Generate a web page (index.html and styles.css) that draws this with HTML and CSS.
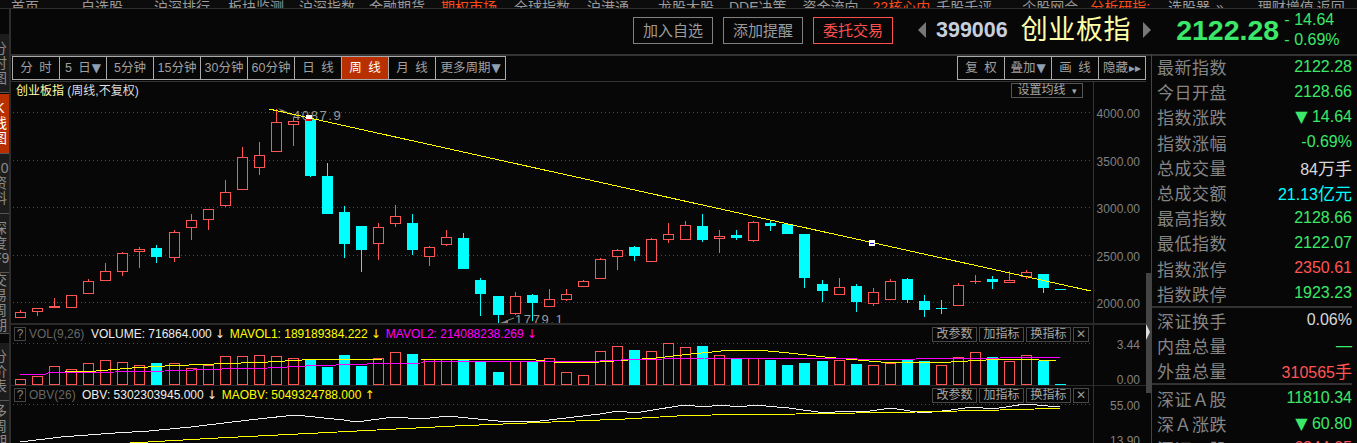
FILE: index.html
```html
<!DOCTYPE html>
<html lang="zh-CN">
<head>
<meta charset="utf-8">
<title>创业板指 周线</title>
<link rel="stylesheet" href="styles.css">
</head>
<body>
<div class="page">
  <nav class="menu">
    <span>首页</span><span class="m42">自选股</span><span class="m31">沪深排行</span><span class="m18">板块监测</span><span class="m15">沪深指数</span><span class="m14">金融期货</span><span class="m16 hot">期权市场</span><span class="m17">全球指数</span><span class="m17">沪港通</span><span class="m29">龙股大股</span><span class="m15">DDE决策</span><span class="m16">资金流向</span><span class="m14 hot">22核心内</span><span class="m6">千股千评</span><span class="m30">个股网会</span><span class="m12 hot">分析研指:</span><span class="m18">选股器</span><span class="m6">»</span><span class="m34">理财增值</span><span class="m3">返回</span>
  </nav>
  <div class="workspace">
    <aside class="rail">
      <div class="rail-tab t1"><span>分</span><span>时</span><span>图</span></div>
      <div class="rail-tab t2 on"><span>K</span><span>线</span><span>图</span></div>
      <div class="rail-tab t3"><span>10</span><span>资</span><span>料</span></div>
      <div class="rail-tab t4"><span>深</span><span>度</span><span>F9</span></div>
      <div class="rail-tab t5"><span>交</span><span>易</span><span>周</span><span>期</span></div>
      <div class="rail-tab t6"><span>分</span><span>价</span><span>表</span></div>
      <div class="rail-tab t7"><span>多</span><span>周</span><span>期</span></div>
    </aside>
    <div class="content">
      <header class="quote">
        <button class="qbtn">加入自选</button>
        <button class="qbtn">添加提醒</button>
        <button class="qbtn danger">委托交易</button>
        <i class="tri-l"></i>
        <span class="code">399006</span>
        <span class="name">创业板指</span>
        <i class="tri-r"></i>
        <span class="price">2122.28</span>
        <div class="change"><span><b>-</b>14.64</span><span><b>-</b>0.69%</span></div>
      </header>
      <div class="split">
        <div class="chartcol">
          <div class="toolbar">
            <div class="tabs">
              <span>分 时</span><span>5 日<em>▼</em></span><span>5分钟</span><span>15分钟</span><span>30分钟</span><span>60分钟</span><span>日 线</span><span class="active">周 线</span><span>月 线</span><span class="wide">更多周期<em>▼</em></span>
            </div>
            <div class="tabs">
              <span>复 权</span><span>叠加<em>▼</em></span><span>画 线</span><span>隐藏<em>▸▸</em></span>
            </div>
          </div>
          <section class="panel p-main">
            <svg id="mainChart" class="plot" viewBox="11 82 1135 241" width="1135" height="241">
              <g class="grid">
                <line x1="13" x2="1093" y1="112.5" y2="112.5"/><line x1="13" x2="1093" y1="160.5" y2="160.5"/><line x1="13" x2="1093" y1="207.5" y2="207.5"/><line x1="13" x2="1093" y1="255.5" y2="255.5"/><line x1="13" x2="1093" y1="302.5" y2="302.5"/>
              </g>
              <line class="axisline" x1="1093.5" x2="1093.5" y1="82" y2="323"/>
              <g class="axis">
                <text x="1140" y="118">4000.00</text><text x="1140" y="166">3500.00</text><text x="1140" y="213">3000.00</text><text x="1140" y="261">2500.00</text><text x="1140" y="308">2000.00</text>
              </g>
              <g id="candles"></g>
              <path class="pointer" d="M278 108l8 4-3 1z"/>
              <path class="pointer-line" d="M282 110l10 5"/>
              <text class="extreme" x="293" y="120">4087.9</text>
              <path class="pointer" d="M500 323l8-3 0 3z"/>
              <path class="pointer-line" d="M506 321l8-3"/>
              <text class="extreme" x="515" y="324">1779.1</text>
              <line class="trend" x1="269" y1="109" x2="1091" y2="291"/>
              <rect class="handle" x="306" y="115" width="6" height="6"/><rect class="handle-red" x="306" y="119" width="6" height="2"/>
              <rect class="handle" x="869" y="240" width="6" height="6"/><rect class="handle-blue" x="870" y="243" width="4" height="1"/>
            </svg>
            <div class="title"><span class="t-name">创业板指</span> (周线,不复权)</div>
            <button class="ma-btn">设置均线<em>▾</em></button>
          </section>
          <section class="panel p-vol">
            <svg id="volChart" class="plot" viewBox="11 325 1135 60" width="1135" height="60">
              <g class="grid"><line x1="13" x2="1093" y1="343.5" y2="343.5"/></g>
              <line class="axisline" x1="1093.5" x2="1093.5" y1="325" y2="385"/>
              <g class="axis"><text x="1140" y="349">3.44</text><text x="1140" y="384">0.00</text></g>
              <g id="bars"></g>
              <polyline class="ma-y" points="65,372 96,371 132,368 165,366 214,364 268,362 302,360 383,359 421,359 475,359 536,360 563,363 600,362 628,360 656,358 691,354 712,352 730,350 758,350 789,353 825,357 846,359 881,362 951,362 986,360 1021,359 1056,361"/>
              <polyline class="ma-m" points="20,374 46,374 48,373 115,372 165,371 222,369 268,368 306,366 367,364 421,363 425,361 536,361 600,361 621,360 705,358 832,358 881,360 916,359 1000,358 1021,357 1060,358"/>
            </svg>
            <div class="ind-head">
              <span class="help">?</span><span class="ind-name">VOL(9,26)</span>
              <span class="white">VOLUME: 716864.000</span><span class="white arrow">↓</span>
              <span class="yellow">MAVOL1: 189189384.222</span><span class="yellow arrow">↓</span>
              <span class="magenta">MAVOL2: 214088238.269</span><span class="magenta arrow">↓</span>
            </div>
            <div class="ind-tools"><button>改参数</button><button>加指标</button><button>换指标</button><button class="close">✕</button></div>
          </section>
          <section class="panel p-obv">
            <svg class="plot" viewBox="11 386 1135 57" width="1135" height="57">
              <g class="grid"><line x1="13" x2="1093" y1="404.5" y2="404.5"/></g>
              <line class="axisline" x1="1093.5" x2="1093.5" y1="386" y2="443"/>
              <g class="axis"><text x="1140" y="410">55.00</text><text x="1140" y="445">13.90</text></g>
              <polyline class="obv-w" points="20,442 61,437 115,433 149,431 191,427 249,420 295,415 344,420 356,422 394,417 421,419 448,416 498,421 532,422 600,414 618,411 635,413 684,405 705,407 719,405 740,407 754,405 789,408 825,413 846,411 863,412 891,408 923,413 951,410 972,407 993,409 1025,404 1060,407"/>
              <polyline class="ma-y" points="130,443 218,438 318,433 455,426 600,420 625,419 677,416 712,415 796,414 916,412 1000,410 1035,409 1060,408"/>
            </svg>
            <div class="ind-head">
              <span class="help">?</span><span class="ind-name obv">OBV(26)</span>
              <span class="white">OBV: 5302303945.000</span><span class="white arrow">↓</span>
              <span class="yellow">MAOBV: 5049324788.000</span><span class="yellow arrow">↑</span>
            </div>
            <div class="ind-tools"><button>改参数</button><button>加指标</button><button>换指标</button><button class="close">✕</button></div>
          </section>
        </div>
        <div class="splitter"><div class="grip"><i></i></div></div>
        <aside class="stats">
          <div class="group">
            <div class="row"><label>最新指数</label><span class="g">2122.28</span></div>
            <div class="row"><label>今日开盘</label><span class="g">2128.66</span></div>
            <div class="row"><label>指数涨跌</label><span class="g"><u>▼</u> 14.64</span></div>
            <div class="row"><label>指数涨幅</label><span class="g">-0.69%</span></div>
            <div class="row"><label>总成交量</label><span class="w">84<small>万手</small></span></div>
            <div class="row"><label>总成交额</label><span class="c">21.13<small>亿元</small></span></div>
            <div class="row"><label>最高指数</label><span class="g">2128.66</span></div>
            <div class="row"><label>最低指数</label><span class="g">2122.07</span></div>
            <div class="row"><label>指数涨停</label><span class="r">2350.61</span></div>
            <div class="row"><label>指数跌停</label><span class="g">1923.23</span></div>
          </div>
          <div class="group">
            <div class="row"><label>深证换手</label><span class="w">0.06%</span></div>
            <div class="row"><label>内盘总量</label><span class="g">—</span></div>
            <div class="row"><label>外盘总量</label><span class="r">310565<small>手</small></span></div>
          </div>
          <div class="group last">
            <div class="row"><label>深证Ａ股</label><span class="g">11810.34</span></div>
            <div class="row"><label>深Ａ涨跌</label><span class="g"><u>▼</u> 60.80</span></div>
            <div class="row"><label>深证Ｂ股</label><span class="r">6244.05</span></div>
          </div>
        </aside>
      </div>
    </div>
  </div>
</div>
<script src="app.js"></script>
</body>
</html>
```
FILE: styles.css
```css
* { box-sizing: border-box; }
html, body { margin: 0; height: 100%; background: #070707; overflow: hidden; }
body { font-family: "Liberation Sans", "Noto Sans CJK SC", sans-serif; color: #999; }
button { font-family: inherit; background: none; padding: 0; margin: 0; cursor: default; }
em { font-style: normal; }
.page { width: 1357px; height: 443px; display: flex; flex-direction: column; overflow: hidden; }

.menu { height: 8px; flex: none; display: flex; align-items: flex-end; overflow: hidden; padding-left: 11px; font-size: 14px; line-height: 14px; color: #9a9a9a; background: #0c0c0c; }
.menu span { flex: none; position: relative; top: 6px; }
.menu .hot { color: #ff4a1a; }
.m3 { margin-left: 3px; } .m6 { margin-left: 6px; } .m12 { margin-left: 12px; } .m14 { margin-left: 14px; } .m15 { margin-left: 15px; } .m16 { margin-left: 16px; } .m17 { margin-left: 17px; } .m18 { margin-left: 18px; } .m29 { margin-left: 29px; } .m30 { margin-left: 30px; } .m31 { margin-left: 31px; } .m34 { margin-left: 34px; } .m42 { margin-left: 42px; }

.workspace { flex: 1; display: flex; min-height: 0; }
.rail { width: 11px; flex: none; border-right: 2px solid #2e2e2e; padding-top: 25px; display: flex; flex-direction: column; overflow: hidden; border-top: 1px solid #2e2e2e; }
.rail-tab { flex: none; display: flex; flex-direction: column; align-items: flex-end; justify-content: center; font-size: 14px; line-height: 15px; color: #8a8a8a; background: #1c1c1c; border-bottom: 1px solid #555; padding-right: 2px; overflow: hidden; }
.rail-tab span { flex: none; width: 14px; text-align: center; white-space: nowrap; }
.rail-tab.on { background: #b83000; color: #fff; }
.t1 { height: 59px; margin-bottom: 1px; } .t2 { height: 60px; } .t3 { height: 60px; } .t4 { height: 59px; } .t5 { height: 61px; margin-bottom: 9px; } .t6 { height: 58px; } .t7 { height: 52px; }

.content { flex: 1; min-width: 0; display: flex; flex-direction: column; }
.quote { height: 48px; flex: none; display: flex; align-items: center; padding-left: 622px; border-top: 1px solid #2e2e2e; border-bottom: 2px solid #333; padding-bottom: 3px; }
.qbtn { width: 80px; height: 27px; margin-right: 10px; border: 1px solid #808080; color: #9c9c9c; font-size: 15px; line-height: 25px; }
.qbtn.danger { border-color: #ff5050; color: #ff5050; }
.tri-l, .tri-r { width: 0; height: 0; border-top: 8px solid transparent; border-bottom: 8px solid transparent; flex: none; }
.tri-l { margin-left: 15px; border-right: 8px solid #777; }
.tri-r { margin-left: 12px; border-left: 8px solid #777; }
.code { margin-left: 10px; font-size: 21.5px; font-weight: 700; color: #c6cfdd; }
.name { margin-left: 13px; font-size: 27px; letter-spacing: .6px; line-height: 34px; color: #ffffa8; }
.price { margin-left: 25px; font-size: 28.5px; font-weight: 700; color: #3ce86a; }
.change { margin-left: 5px; display: flex; flex-direction: column; font-size: 16px; line-height: 20px; color: #3ce86a; }
.change b { font-weight: 400; display: inline-block; width: 10px; }

.split { flex: 1; min-height: 0; display: flex; }
.chartcol { width: 1135px; flex: none; display: flex; flex-direction: column; }
.toolbar { height: 26px; flex: none; display: flex; justify-content: space-between; padding: 0 0 1px 1px; border-bottom: 1px solid #333; }
.tabs { display: flex; height: 24px; border: 1px solid #aaa; }
.tabs span { width: 47px; flex: none; text-align: center; font-size: 12.5px; word-spacing: 3px; line-height: 22px; color: #a0a0a0; border-left: 1px solid #aaa; white-space: nowrap; }
.tabs span:first-child { border-left: 0; width: 46px; }
.tabs em { color: #8fa0b4; font-size: 12px; font-family: "DejaVu Sans", sans-serif; margin-left: 1px; }
.tabs .active { background: #b83000; color: #fff; }
.tabs .wide { width: 70px; }

.panel { position: relative; flex: none; overflow: hidden; }
.p-main { height: 241px; }
.p-vol { height: 62px; border-top: 2px solid #2a2a2a; }
.p-obv { height: 58px; border-top: 1px solid #2a2a2a; }
.plot { display: block; }
.grid line { stroke: #4a4a4a; stroke-width: 1; stroke-dasharray: 1 3; }
.axisline { stroke: #333; stroke-width: 1; }
.axis text { fill: #808080; font-size: 12px; text-anchor: end; font-family: "Liberation Sans", sans-serif; }
.trend { stroke: #ffff00; stroke-width: 1; shape-rendering: crispEdges; }
.handle { fill: #fff; } .handle-red { fill: #e00000; } .handle-blue { fill: #0000d0; }
.pointer { fill: #888; }
.pointer-line { stroke: #888; fill: none; }
.extreme { fill: #9a9a9a; font-size: 13px; letter-spacing: 1.6px; font-family: "Liberation Sans", sans-serif; }
.ma-y, .ma-m, .obv-w { fill: none; stroke-width: 1; shape-rendering: crispEdges; }
.ma-y { stroke: #ffff00; } .ma-m { stroke: #ff00ff; } .obv-w { stroke: #f0f0f0; }

.title { position: absolute; left: 5px; top: 2px; font-size: 12px; line-height: 15px; color: #ddd; white-space: nowrap; }
.t-name { color: #ffffa8; }
.ma-btn { position: absolute; left: 1000px; top: 1px; width: 72px; height: 15px; border: 1px solid #555; color: #a8a8a8; font-size: 12px; line-height: 12px; white-space: nowrap; }
.ma-btn em { font-size: 9px; margin-left: 6px; }

.ind-head { position: absolute; left: 3px; top: 2px; display: flex; align-items: center; font-size: 12px; line-height: 14px; white-space: nowrap; }
.help { width: 12px; height: 14px; border: 1px solid #444; color: #888; text-align: center; line-height: 12px; margin-right: 3px; }
.ind-name { color: #666; width: 62px; }
.ind-name.obv { width: 53px; }
.white { color: #eee; } .yellow { color: #ffff00; } .magenta { color: #ff00ff; }
.arrow { font-size: 12px; margin: 0 5px 0 3px; font-family: "DejaVu Sans", sans-serif; }
.ind-tools { position: absolute; left: 921px; top: 2px; display: flex; gap: 2px; }
.ind-tools button { width: 45px; height: 15px; border: 1px solid #484848; color: #a6a6a6; font-size: 12px; line-height: 13px; white-space: nowrap; }
.ind-tools .close { width: 16px; color: #999; font-size: 12px; font-family: "DejaVu Sans", sans-serif; }

.splitter { width: 5px; flex: none; padding-top: 217px; }
.grip { position: relative; height: 120px; background: #444; }
.grip i { position: absolute; left: 0; top: 51px; width: 0; height: 0; border-left: 4px solid #ddd; border-top: 8px solid transparent; border-bottom: 8px solid transparent; }

.stats { flex: 1; min-width: 0; margin-top: -2px; border-left: 1px solid #444; padding-right: 5px; overflow: hidden; }
.group { border-bottom: 2px solid #333; }
.group.last { border-bottom: 0; }
.row { height: 25.2px; display: flex; align-items: center; justify-content: space-between; padding-left: 5px; white-space: nowrap; }
.row label { font-size: 17px; letter-spacing: .5px; color: #858585; }
.row span { font-size: 16px; }
.row small { font-size: 17px; }
.row u { text-decoration: none; font-family: "DejaVu Sans", sans-serif; font-size: 16px; }
.g { color: #3ce86a; } .w { color: #d8d8d8; } .c { color: #00ffff; } .r { color: #ff5555; }
```
FILE: app.js
```js
// x, wick top, body top, body bottom, wick bottom, colour (r = up, c = down)
var CANDLES = [
[20.5,310,312,318,318,'r'],[37.5,308,308,312,316,'r'],[54.5,298,306,308,308,'r'],[71.5,295,295,308,308,'r'],
[88.5,279,281,294,294,'r'],[105.5,263,271,281,281,'r'],[122.5,252,253,272,276,'r'],[139.5,247,249,252,268,'r'],
[156.5,245,248,257,263,'c'],[174.5,230,232,258,262,'r'],[191.5,214,220,228,240,'r'],[208.5,209,209,220,230,'r'],
[225.5,180,192,206,207,'r'],[242.5,147,157,190,190,'r'],[259.5,142,155,168,175,'r'],[276.5,109,122,152,152,'r'],
[293.5,118,121,125,146,'r'],[310.5,115,119,176,177,'c'],[327.5,163,176,214,214,'c'],[344.5,206,212,244,258,'c'],
[361.5,226,226,250,272,'c'],[378.5,223,227,244,260,'r'],[395.5,205,216,224,227,'r'],[412.5,214,223,250,255,'c'],
[429.5,246,247,257,266,'r'],[446.5,230,237,245,246,'r'],[463.5,233,238,269,269,'c'],[480.5,278,280,294,316,'c'],
[498.5,296,296,315,323,'c'],[515.5,292,296,314,315,'r'],[532.5,294,295,303,321,'c'],[549.5,289,299,307,307,'r'],
[566.5,289,294,300,301,'r'],[583.5,280,281,287,287,'r'],[600.5,258,259,279,279,'r'],[617.5,249,250,257,270,'r'],
[634.5,246,247,256,261,'c'],[651.5,238,239,262,262,'r'],[668.5,223,234,240,243,'r'],[685.5,221,225,240,240,'r'],
[702.5,214,226,240,242,'c'],[719.5,230,236,239,253,'r'],[736.5,230,235,238,240,'c'],[753.5,221,222,241,242,'r'],
[770.5,220,223,226,231,'c'],[787.5,223,224,234,234,'c'],[804.5,234,234,278,288,'c'],[822.5,280,284,291,302,'c'],
[839.5,278,287,295,295,'r'],[856.5,284,286,302,312,'c'],[873.5,288,292,304,306,'r'],[890.5,279,281,300,300,'r'],
[907.5,278,279,300,303,'c'],[924.5,295,301,310,317,'c'],[941.5,300,308,308,314,'c'],[958.5,283,285,306,306,'r'],
[975.5,275,281,281,284,'r'],[992.5,276,279,282,289,'c'],[1009.5,271,280,283,283,'r'],[1026.5,270,272,277,279,'r'],
[1043.5,274,274,288,293,'c'],[1060.5,289,289,289,289,'c']
];
// top of each volume bar, same order as the candles
var VOL = [379,376,366,369,363,360,362,365,363,363,368,365,356,356,355,356,358,359,367,355,366,358,352,354,359,359,359,362,372,361,361,358,372,375,351,346,350,351,343,347,346,355,358,358,360,365,363,361,360,364,365,363,360,361,365,357,352,357,361,355,361,384];
// colour of each volume bar where it differs from its candle
var VOL_COLOUR = {30:'r',31:'c',39:'r',40:'r',41:'c',42:'r',43:'c',44:'r',45:'c',46:'c',47:'c',48:'c',49:'r',50:'c',51:'r',52:'r',53:'c',54:'c',55:'r',56:'r',57:'r',58:'c',59:'r',60:'r',61:'c',62:'c'};
var RED = '#ff5555', CYAN = '#00ffff', BG = '#070707';

function rect(x, y, w, h, fill, stroke) {
  return '<rect x="' + x + '" y="' + y + '" width="' + w + '" height="' + h + '" fill="' + fill + '"' + (stroke ? ' stroke="' + stroke + '"' : '') + ' shape-rendering="crispEdges"/>';
}
function vline(x, y1, y2, c) {
  return '<line x1="' + x + '" x2="' + x + '" y1="' + y1 + '" y2="' + y2 + '" stroke="' + c + '" shape-rendering="crispEdges"/>';
}

var candleHtml = '';
CANDLES.forEach(function (d) {
  var x = d[0], c = d[5] === 'r' ? RED : CYAN;
  candleHtml += vline(x, d[1], d[4], c);
  if (d[3] === d[2]) {
    candleHtml += '<line x1="' + (x - 5.5) + '" x2="' + (x + 5.5) + '" y1="' + (d[2] + .5) + '" y2="' + (d[2] + .5) + '" stroke="' + c + '" shape-rendering="crispEdges"/>';
  } else if (d[5] === 'r') {
    candleHtml += rect(x - 5, d[2] + .5, 10, d[3] - d[2] - 1, BG, c);
  } else {
    candleHtml += rect(x - 5.5, d[2], 11, d[3] - d[2], c);
  }
});
document.getElementById('candles').innerHTML = candleHtml;

var barHtml = '';
VOL.forEach(function (top, i) {
  var n = i + 1, x = CANDLES[i][0] - .5;
  var k = VOL_COLOUR[n] || CANDLES[i][5];
  if (k === 'r') barHtml += rect(x - 5, top + .5, 10, 384 - top, BG, RED);
  else barHtml += rect(x - 5.5, top, 11, 385 - top, CYAN);
});
document.getElementById('bars').innerHTML = barHtml;
```
